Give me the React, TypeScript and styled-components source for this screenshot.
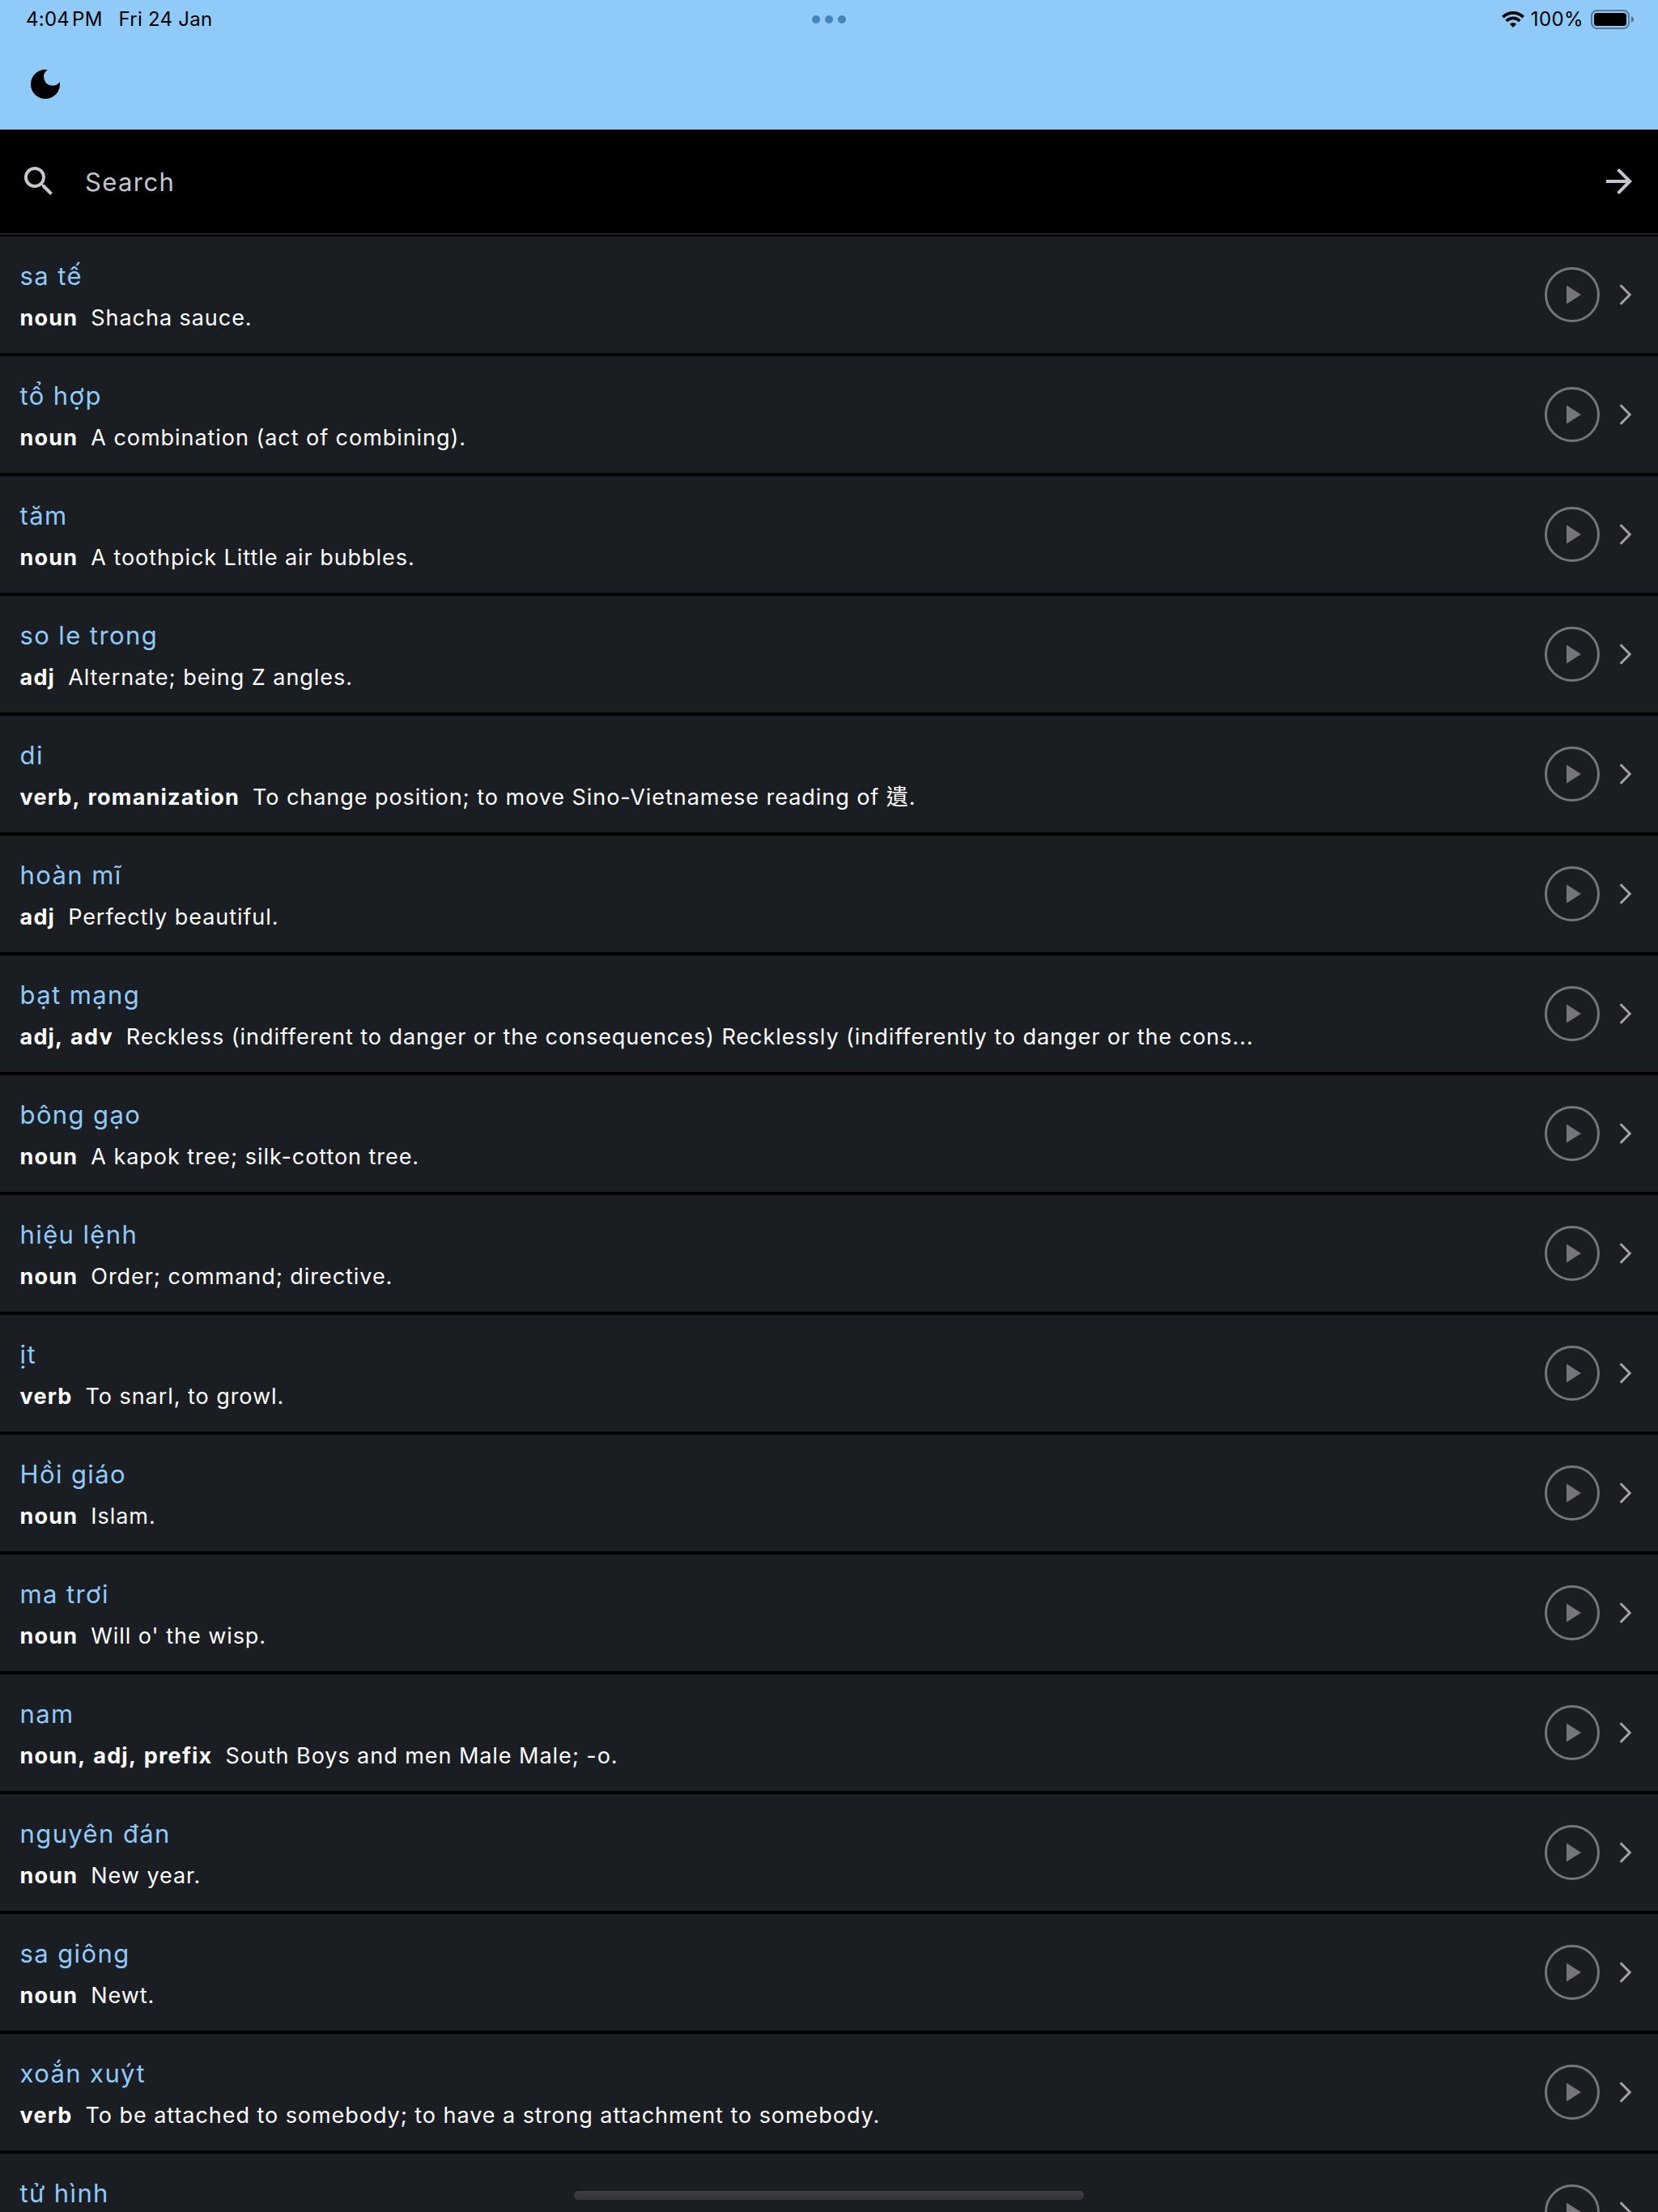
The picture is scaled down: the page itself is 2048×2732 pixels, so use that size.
import React from "react";
import styled, { createGlobalStyle } from "styled-components";

interface Entry {
  word: string;
  types?: string;
  meaning?: string;
}

const entries: Entry[] = [
  { word: "sa tế", types: "noun", meaning: "Shacha sauce." },
  {
    word: "tổ hợp",
    types: "noun",
    meaning: "A combination (act of combining).",
  },
  {
    word: "tăm",
    types: "noun",
    meaning: "A toothpick Little air bubbles.",
  },
  {
    word: "so le trong",
    types: "adj",
    meaning: "Alternate; being Z angles.",
  },
  {
    word: "di",
    types: "verb, romanization",
    meaning: "To change position; to move Sino-Vietnamese reading of 遺.",
  },
  { word: "hoàn mĩ", types: "adj", meaning: "Perfectly beautiful." },
  {
    word: "bạt mạng",
    types: "adj, adv",
    meaning:
      "Reckless (indifferent to danger or the consequences) Recklessly (indifferently to danger or the cons...",
  },
  {
    word: "bông gạo",
    types: "noun",
    meaning: "A kapok tree; silk-cotton tree.",
  },
  {
    word: "hiệu lệnh",
    types: "noun",
    meaning: "Order; command; directive.",
  },
  { word: "ịt", types: "verb", meaning: "To snarl, to growl." },
  { word: "Hồi giáo", types: "noun", meaning: "Islam." },
  { word: "ma trơi", types: "noun", meaning: "Will o' the wisp." },
  {
    word: "nam",
    types: "noun, adj, prefix",
    meaning: "South Boys and men Male Male; -o.",
  },
  { word: "nguyên đán", types: "noun", meaning: "New year." },
  { word: "sa giông", types: "noun", meaning: "Newt." },
  {
    word: "xoắn xuýt",
    types: "verb",
    meaning:
      "To be attached to somebody; to have a strong attachment to somebody.",
  },
  { word: "tử hình" },
];

const App: React.FunctionComponent = () => (
  <>
    <GlobalStyle />
    <Screen>
      <Header>
        <StatusBar>
          <StatusLeft>
            <Time>4:04 PM</Time>
            <span>Fri 24 Jan</span>
          </StatusLeft>
          <Dots>
            <Dot />
            <Dot />
            <Dot />
          </Dots>
          <StatusRight>
            <WifiIcon />
            <Percent>100%</Percent>
            <Battery />
          </StatusRight>
        </StatusBar>
        <AppBar>
          <MoonIcon />
        </AppBar>
      </Header>
      <SearchBar>
        <SearchIcon />
        <Placeholder>Search</Placeholder>
        <ArrowIcon />
      </SearchBar>
      <List>
        {entries.map((entry) => (
          <Row key={entry.word}>
            <RowText>
              <Word>{entry.word}</Word>
              <Definition>
                {entry.types && <Types>{entry.types}</Types>}
                {entry.meaning && <span>{entry.meaning}</span>}
              </Definition>
            </RowText>
            <Actions>
              <PlayIcon />
              <ChevronIcon />
            </Actions>
          </Row>
        ))}
      </List>
      <HomeIndicator />
    </Screen>
  </>
);

export default App;

const WifiIcon = () => (
  <svg width="28" height="20" viewBox="0 0 28 20">
    <g fill="none" stroke="#000" strokeWidth="3.6">
      <path d="M1.3 7.1a18 18 0 0 1 25.4 0" />
      <path d="M5.7 11.9a11.6 11.6 0 0 1 16.6 0" />
    </g>
    <path d="M14 20l-4.1-4.2a5.8 5.8 0 0 1 8.2 0z" fill="#000" />
  </svg>
);

const Battery = () => (
  <svg width="54" height="24" viewBox="0 0 54 24">
    <rect
      x="1"
      y="1"
      width="46"
      height="22"
      rx="6.5"
      fill="none"
      stroke="#000"
      strokeOpacity="0.4"
      strokeWidth="2"
    />
    <rect x="4" y="4" width="40" height="16" rx="3.5" fill="#000" />
    <path d="M50 8c1.8.7 3 2.200 3 4s-1.200 3.300-3 4z" fillOpacity="0.45" />
  </svg>
);

const MoonIcon = () => (
  <svg width="48" height="48" viewBox="0 0 24 24">
    <path d="M12 3a9 9 0 1 0 9 9c0-.46-.04-.92-.1-1.360a5.389 5.389 0 0 1-4.400 2.260 5.403 5.403 0 0 1-3.140-9.800c-.44-.06-.9-.1-1.360-.1z" />
  </svg>
);

const SearchIcon = () => (
  <svg width="48" height="48" viewBox="0 0 24 24" fill="#c3c6cf">
    <path d="M15.500 14h-.79l-.28-.27A6.471 6.471 0 0 0 16 9.500 6.500 6.500 0 1 0 9.500 16c1.610 0 3.090-.59 4.230-1.570l.27.280v.790l5 4.990L20.490 19l-4.990-5zm-6 0C7.010 14 5 11.990 5 9.500S7.010 5 9.500 5 14 7.010 14 9.500 11.990 14 9.500 14z" />
  </svg>
);

const ArrowIcon = () => (
  <svg width="48" height="48" viewBox="0 0 24 24" fill="#c3c6cf">
    <path d="M12 4l-1.410 1.410L16.170 11H4v2h12.170l-5.580 5.590L12 20l8-8z" />
  </svg>
);

const PlayIcon = () => (
  <svg width="68" height="68" viewBox="0 0 68 68">
    <circle
      cx="34"
      cy="34"
      r="32.500"
      fill="none"
      stroke="#757678"
      strokeWidth="3"
    />
    <path d="M27 22.500L45 34 27 45.500z" fill="#757678" />
  </svg>
);

const ChevronIcon = () => (
  <svg width="48" height="48" viewBox="0 0 48 48">
    <path
      d="M17.700 12.200L29.200 24 17.700 35.800"
      fill="none"
      stroke="#a3a3a3"
      strokeWidth="3"
    />
  </svg>
);

const GlobalStyle = createGlobalStyle`
  * {
    box-sizing: border-box;
  }

  body {
    margin: 0;
    background: #000;
    font-family: Inter, "Noto Sans CJK TC", sans-serif;
  }

  svg {
    display: block;
    flex-shrink: 0;
  }
`;

const Screen = styled.div`
  position: relative;
  display: flex;
  flex-direction: column;
  width: 2048px;
  height: 2732px;
  overflow: hidden;
`;

const Header = styled.header`
  height: 160px;
  flex-shrink: 0;
  background: #90caf9;
`;

const StatusBar = styled.div`
  display: grid;
  grid-template-columns: 1fr auto 1fr;
  align-items: center;
  height: 48px;
  padding: 0 29px 0 32px;
  font-size: 24px;
  line-height: 46px;
  color: #000;
`;

const StatusLeft = styled.div`
  display: flex;
  gap: 20px;
  letter-spacing: 0.25px;
`;

const Time = styled.span`
  word-spacing: -4px;
`;

const Dots = styled.div`
  display: flex;
  gap: 6px;
  margin-right: 3px;
`;

const Dot = styled.span`
  width: 10px;
  height: 10px;
  border-radius: 50%;
  background: #4486b8;
`;

const StatusRight = styled.div`
  display: flex;
  justify-content: flex-end;
  align-items: center;
`;

const Percent = styled.span`
  margin: 0 9px 0 8px;
  letter-spacing: 0.4px;
`;

const AppBar = styled.div`
  display: flex;
  align-items: center;
  height: 112px;
  padding: 0 32px;
`;

const SearchBar = styled.div`
  display: flex;
  align-items: center;
  flex-shrink: 0;
  height: 130px;
  padding: 0 24px;
  border-bottom: 2px solid #232323;
`;

const Placeholder = styled.span`
  flex: 1;
  margin-left: 33px;
  font-size: 31px;
  letter-spacing: 1.4px;
  color: #c3c6cf;
`;

const List = styled.div`
  padding-top: 2px;
`;

const Row = styled.div`
  display: flex;
  align-items: center;
  height: 148px;
  padding: 0 16px 0 24px;
  background: #1a1d21;
  border-bottom: 4px solid #000;
`;

const RowText = styled.div`
  flex: 1;
  padding: 6px 0 0 0.5px;
  white-space: nowrap;
`;

const Word = styled.div`
  font-size: 31px;
  line-height: 48px;
  letter-spacing: 1.4px;
  color: #90caf9;
`;

const Definition = styled.div`
  display: flex;
  gap: 16px;
  min-height: 48px;
  margin-top: 4px;
  font-size: 27px;
  line-height: 48px;
  letter-spacing: 0.95px;
  color: #fff;
`;

const Types = styled.span`
  font-weight: 700;
  letter-spacing: 1.2px;
  word-spacing: 2px;
`;

const Actions = styled.div`
  display: flex;
  align-items: center;
  gap: 8px;
`;

const HomeIndicator = styled.div`
  position: absolute;
  left: 709px;
  bottom: 15px;
  width: 630px;
  height: 11px;
  border-radius: 6px;
  background: linear-gradient(#3f3f41, #343536);
`;
